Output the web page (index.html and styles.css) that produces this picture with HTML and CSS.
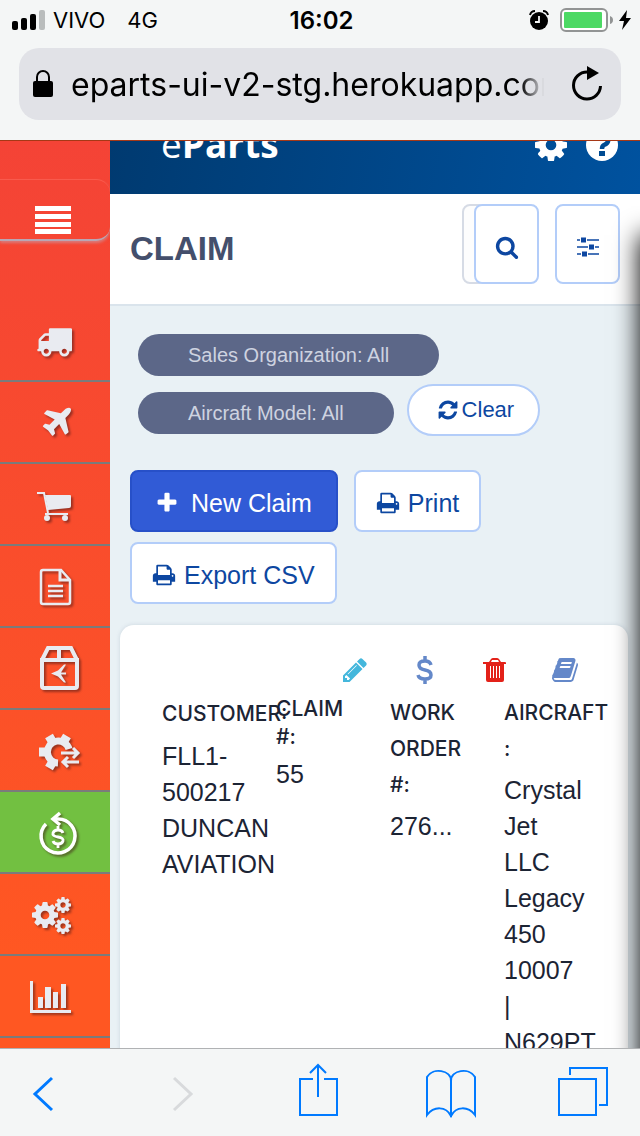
FILE: index.html
```html
<!DOCTYPE html>
<html lang="en">
<head>
<meta charset="utf-8">
<meta name="viewport" content="width=device-width, initial-scale=1">
<title>eParts – Claim</title>
<link rel="stylesheet" href="styles.css">
</head>
<body>
<svg class="sprite" aria-hidden="true">
  <symbol id="cog" viewBox="128 128 1536 1536"><path d="M1152 896q0-106-75-181t-181-75-181 75-75 181 75 181 181 75 181-75 75-181zm512-109v222q0 12-8 23t-20 13l-185 28q-19 54-39 91 35 50 107 138 10 12 10 25t-9 23q-27 37-99 108t-94 71q-12 0-26-9l-138-108q-44 23-91 38-16 136-29 186-7 28-36 28h-222q-14 0-24.500-8.500t-11.500-21.500l-28-184q-49-16-90-37l-141 107q-10 9-25 9-14 0-25-11-126-114-165-168-7-10-7-23 0-12 8-23 15-21 51-66.500t54-70.500q-27-50-41-99l-183-27q-13-2-21-12.500t-8-23.500v-222q0-12 8-23t19-13l186-28q14-46 39-92-40-57-107-138-10-12-10-24 0-10 9-23 26-36 98.500-107.500t94.500-71.500q13 0 26 10l138 107q44-23 91-38 16-136 29-186 7-28 36-28h222q14 0 24.500 8.500t11.500 21.500l28 184q49 16 90 37l142-107q9-9 24-9 13 0 25 10 129 119 165 170 7 8 7 22 0 12-8 23-15 21-51 66.500t-54 70.500q26 50 41 98l183 28q13 2 21 12.500t8 23.500z"/></symbol>
  <symbol id="print" viewBox="0 0 1792 1792"><path d="M448 1536h896v-256h-896v256zm0-640h896v-384h-160q-40 0-68-28t-28-68v-160h-640v640zm1152 64q0-26-19-45t-45-19-45 19-19 45 19 45 45 19 45-19 19-45zm128 0v416q0 13-9.500 22.500t-22.500 9.500h-224v160q0 40-28 68t-68 28h-960q-40 0-68-28t-28-68v-160h-224q-13 0-22.500-9.500t-9.500-22.500v-416q0-79 56.500-135.500t135.500-56.500h64v-544q0-40 28-68t68-28h672q40 0 88 20t76 48l152 152q28 28 48 76t20 88v256h64q79 0 135.500 56.500t56.500 135.500z"/></symbol>
</svg>

<header class="browser-top">
  <div class="status">
    <div class="status-left">
      <svg width="34" height="22" viewBox="0 0 34 22" aria-hidden="true"><rect x="0" y="12" width="6" height="9" rx="2"/><rect x="9" y="9" width="6" height="12" rx="2"/><rect x="18" y="5" width="6" height="16" rx="2"/><rect x="27" y="1" width="6" height="20" rx="2" fill="#b9bcbc"/></svg>
      <span>VIVO</span><span class="network">4G</span>
    </div>
    <time class="clock">16:02</time>
    <div class="status-right">
      <svg class="alarm" width="20" height="20" viewBox="0 0 20 20" aria-hidden="true"><circle cx="10" cy="11" r="9"/><path d="M1 5Q2 1 6 1M19 5Q18 1 14 1" fill="none" stroke="#000" stroke-width="2"/><path d="M10 6v6H6" fill="none" stroke="#f4f6f6" stroke-width="1.800"/></svg>
      <svg width="54" height="24" viewBox="0 0 54 24" aria-hidden="true"><rect x="1" y="1" width="46" height="22" rx="5" fill="#fff" stroke="#929494" stroke-width="2"/><rect x="4" y="4" width="38" height="16" rx="1" fill="#4cd964"/><path d="M50 8q3 1 3 4t-3 4z" fill="#929494"/></svg>
      <svg width="12" height="20" viewBox="0 0 12 20" aria-hidden="true"><path d="M8 0L0 11h5L3 20l9-12H7z"/></svg>
    </div>
  </div>
  <form class="address">
    <svg width="22" height="30" viewBox="0 0 22 30" aria-hidden="true"><rect x="1" y="12" width="20" height="16" rx="2"/><path d="M5 13V8a6 6 0 0 1 12 0v5" fill="none" stroke="#000" stroke-width="2"/></svg>
    <input class="url" type="text" aria-label="Address" value="eparts-ui-v2-stg.herokuapp.com">
    <button class="reload" type="button" aria-label="Reload"><svg width="32" height="36" viewBox="0 0 32 36"><path d="M16 6A13.500 13.500 0 1 0 29.500 20" fill="none" stroke="#000" stroke-width="3"/><path d="M16 0l12 7-12 7z"/></svg></button>
  </form>
</header>

<div class="app">
  <nav class="sidebar" aria-label="Main">
    <button class="menu" type="button" aria-label="Menu"><svg width="36" height="30" viewBox="0 0 36 30"><path d="M0 1h36v5H0zM0 9h36v5H0zM0 17h36v5H0zM0 24h36v5H0z"/></svg></button>
    <a class="nav-item" href="#" aria-label="Shipping"><svg viewBox="0 0 48 48"><path transform="translate(5 7) scale(.0201)" d="M640 1408q0-52-38-90t-90-38-90 38-38 90 38 90 90 38 90-38 38-90zm-384-512h384v-256h-158q-13 0-22 9l-195 195q-9 9-9 22v30zm1280 512q0-52-38-90t-90-38-90 38-38 90 38 90 90 38 90-38 38-90zm256-1088v1024q0 15-4 26.500t-13.500 18.500-16.500 11.500-23.500 6-22.500 2-25.500 0-22.500-.5q0 106-75 181t-181 75-181-75-75-181h-384q0 106-75 181t-181 75-181-75-75-181h-64q-3 0-22.500.5t-25.500 0-22.500-2-23.500-6-16.500-11.500-13.500-18.500-4-26.500q0-26 19-45t45-19v-320q0-8-.5-35t0-38 2.500-34.500 6.500-37 14-30.500 22.500-30l198-198q19-19 50.500-32t58.500-13h160v-192q0-26 19-45t45-19h1024q26 0 45 19t19 45z"/></svg></a>
    <a class="nav-item" href="#" aria-label="Aircraft"><svg viewBox="0 0 48 48"><path transform="translate(8 7) scale(.0201)" d="M1568 160q44 52 12 148t-108 172l-161 161 160 696q5 19-12 33l-128 96q-7 6-19 6-4 0-7-1-15-3-21-16l-279-508-259 259 53 194q5 17-8 31l-96 96q-9 9-23 9h-2q-15-2-24-13l-189-252-252-189q-11-7-13-23-1-13 9-25l96-97q9-9 23-9 6 0 8 1l194 53 259-259-508-279q-14-8-17-24-2-16 9-27l128-128q14-13 30-8l665 159 160-160q76-76 172-108t148 12z"/></svg></a>
    <a class="nav-item" href="#" aria-label="Cart"><svg viewBox="0 0 48 48"><path d="M14 15h25q1 0 1 1v10q0 2-2 2l-21 2z"/><path d="M6 13h7l4 20M14 34h23" fill="none" stroke="currentColor" stroke-width="2"/><circle cx="16" cy="38" r="3"/><circle cx="34" cy="38" r="3"/></svg></a>
    <a class="nav-item" href="#" aria-label="Documents"><svg viewBox="0 0 48 48" class="line"><path d="M12 8h18l9 10v22q0 2-2 2H12q-2 0-2-2V10q0-2 2-2z" stroke-width="2.500"/><path d="M29 8v10h10" stroke-width="3"/><path d="M17 24h15M17 29h15M17 34h15" stroke-width="2.500"/></svg></a>
    <a class="nav-item" href="#" aria-label="Parts"><svg viewBox="0 0 48 48"><g class="line"><path d="M11 16h35v26q0 2-2 2H13q-2 0-2-2zM11 16L17 4h23l6 12M28 4v11" stroke-width="4"/></g><path d="M20 29.500l7-3 6-6h2l-5 8h5v2h-5l5 8h-2l-6-6z"/></svg></a>
    <a class="nav-item" href="#" aria-label="Exchange"><svg viewBox="0 0 48 48" class="line"><path d="M38 23A11 11 0 1 0 27 37" stroke-width="7"/><path d="M33 15l3-5M21 15l-3-5M15 26H8M21 37l-3 5" stroke-width="9"/><path d="M30 27h16M42 22l5 5-5 5M48 36H33M37 31l-5 5 5 5" stroke-width="3"/></svg></a>
    <a class="nav-item active" href="#" aria-label="Claim"><svg viewBox="0 0 48 48" class="line"><path d="M22 11h5A17 17 0 1 1 15 16" stroke-width="3.500"/><path d="M29 5l-7 6 7 6" stroke-width="3.500"/><path d="M32 25q-1-3-5-3t-5 3 5 4 5 4-5 3-5-3M27 18v4M27 36v4" stroke-width="2.800"/></svg></a>
    <a class="nav-item" href="#" aria-label="Settings"><svg viewBox="0 0 48 48"><use href="#cog" x="1" y="12" width="26" height="26"/><use href="#cog" x="24" y="7" width="16" height="16"/><use href="#cog" x="24" y="28" width="16" height="16"/></svg></a>
    <a class="nav-item" href="#" aria-label="Reports"><svg viewBox="0 0 48 48"><path d="M-1 9h3v29h38v3H-1zM7 25h5v11H7zM14 15h6v21h-6zM22 20h5v16h-5zM30 12h5v24h-5z"/></svg></a>
  </nav>

  <main class="content">
    <div class="brandbar">
      <div class="logo"><span class="logo-e">e</span>Parts</div>
      <button class="brand-action" type="button" aria-label="Settings"><svg width="34" height="34"><use href="#cog" x="0" y="1" width="32" height="32"/></svg></button>
      <button class="brand-action" type="button" aria-label="Help"><svg width="34" height="34" viewBox="0 0 34 34"><circle cx="16" cy="17" r="16"/><path d="M10 12q1-5 6-5t6 4-4 6q-2 1-2 4" fill="none" stroke="#004b92" stroke-width="4.500"/><path d="M13 23h6v5h-6z" fill="#004b92"/></svg></button>
    </div>

    <div class="titlebar">
      <h1 class="title">CLAIM</h1>
      <input class="search-field" type="search" aria-label="Search claims">
      <button class="square search-button" type="button" aria-label="Search"><svg width="24" height="24" viewBox="0 0 1792 1792"><path d="M1216 832q0-185-131.500-316.500t-316.500-131.500-316.500 131.500-131.500 316.500 131.500 316.500 316.500 131.500 316.500-131.500 131.500-316.500zm512 832q0 52-38 90t-90 38q-54 0-90-38l-343-342q-179 124-399 124-143 0-273.500-55.500t-225-150-150-225-55.500-273.500 55.500-273.500 150-225 225-150 273.500-55.500 273.500 55.500 225 150 150 225 55.500 273.500q0 220-124 399l343 343q37 37 37 90z"/></svg></button>
      <button class="square" type="button" aria-label="Filters"><svg width="22" height="20" viewBox="0 0 22 20"><path d="M0 2.300h3v1.400H0zM10 2.300h12v1.400H10zM4 .5h5v5H4zM0 9.300h11v1.400H0zM18 9.300h4v1.400h-4zM12 7.500h5v5h-5zM0 16.300h4v1.400H0zM11 16.300h11v1.400H11zM5 14.500h5v5H5z"/></svg></button>
    </div>

    <section class="workspace">
      <div class="filters">
        <span class="chip">Sales Organization: All</span>
        <span class="chip">Aircraft Model: All</span>
        <button class="button clear" type="button"><svg width="22" height="22" viewBox="0 0 1792 1792"><path d="M1639 1056q0 5-1 7-64 268-268 434.500t-478 166.500q-146 0-282.500-55t-243.500-157l-129 129q-19 19-45 19t-45-19-19-45v-448q0-26 19-45t45-19h448q26 0 45 19t19 45-19 45l-137 137q71 66 161 102t187 36q134 0 250-65t186-179q11-17 53-117 8-23 30-23h192q13 0 22.500 9.500t9.500 22.500zm25-800v448q0 26-19 45t-45 19h-448q-26 0-45-19t-19-45 19-45l138-138q-148-137-349-137-134 0-250 65t-186 179q-11 17-53 117-8 23-30 23h-199q-13 0-22.500-9.500t-9.500-22.500v-7q65-268 270-434.500t480-166.500q146 0 284 55.500t245 156.500l130-129q19-19 45-19t45 19 19 45z"/></svg>Clear</button>
      </div>

      <div class="actions">
        <button class="button primary" type="button"><svg width="24" height="24" viewBox="0 0 1792 1792"><path d="M1600 736v192q0 40-28 68t-68 28h-416v416q0 40-28 68t-68 28h-192q-40 0-68-28t-28-68v-416h-416q-40 0-68-28t-28-68v-192q0-40 28-68t68-28h416v-416q0-40 28-68t68-28h192q40 0 68 28t28 68v416h416q40 0 68 28t28 68z"/></svg>New Claim</button>
        <button class="button" type="button"><svg width="24" height="24"><use href="#print"/></svg>Print</button>
        <button class="button" type="button"><svg width="24" height="24"><use href="#print"/></svg>Export CSV</button>
      </div>

      <article class="card">
        <div class="card-tools">
          <button class="tool edit" type="button" aria-label="Edit"><svg viewBox="0 0 1792 1792"><path d="M491 1536l91-91-235-235-91 91v107h128v128h107zm523-928q0-22-22-22-10 0-17 7l-542 542q-7 7-7 17 0 22 22 22 10 0 17-7l542-542q7-7 7-17zm-54-192l416 416-832 832h-416v-416zm683 96q0 53-37 90l-166 166-416-416 166-165q36-38 90-38 53 0 91 38l235 234q37 39 37 91z"/></svg></button>
          <button class="tool" type="button" aria-label="Payment"><svg viewBox="0 0 28 28" class="line"><path d="M20 9q-1-4-6-4-6 0-6 4t6 5 6 5-6 4q-6 0-7-4M14 0v5M14 23v5" stroke-width="3.500"/></svg></button>
          <button class="tool delete" type="button" aria-label="Delete"><svg viewBox="0 0 28 28"><path fill-rule="evenodd" d="M2 6h6l2-3q1-1 2-1h4q1 0 2 1l2 3h4q1 0 1 1v1h-2v16q0 2-2 2H7q-2 0-2-2V8H2zm8 0h8l-1-2h-6zM9 10v12h1V10zm3 0v12h1V10zm3 0v12h1V10zm3 0v12h1V10z"/></svg></button>
          <button class="tool" type="button" aria-label="Notes"><svg viewBox="0 0 1792 1792"><path d="M1703 478q40 57 18 129l-275 906q-19 64-76.500 107.500t-122.500 43.500h-923q-77 0-148.500-53.500t-99.500-131.500q-24-67-2-127 0-4 3-27t4-37q1-8-3-21.500t-3-19.500q2-11 8-21t16.500-23.500 16.500-23.500q23-38 45-91.500t30-91.500q3-10 .5-30t-.5-28q3-11 17-28t17-23q21-36 42-92t25-90q1-9-2.500-32t.5-28q4-13 22-30.500t22-22.500q19-26 42.500-84.500t27.500-96.500q1-8-3-25.500t-2-26.500q2-8 9-18t18-23 17-21q8-12 16.500-30.500t15-35 16-36 19.500-32 26.500-23.500 36-11.500 47.500 5.500l-1 3q38-9 51-9h761q74 0 114 56t18 130l-274 906q-36 119-71.500 153.500t-128.500 34.500h-869q-27 0-38 15-11 16-1 43 24 70 144 70h923q29 0 56-15.500t35-41.500l300-987q7-22 5-57 38 15 59 43zm-1064 2q-4 13 2 22.500t20 9.500h608q13 0 25.500-9.500t16.500-22.500l21-64q4-13-2-22.500t-20-9.500h-608q-13 0-25.500 9.500t-16.500 22.500zm-83 256q-4 13 2 22.500t20 9.500h608q13 0 25.500-9.500t16.500-22.500l21-64q4-13-2-22.500t-20-9.500h-608q-13 0-25.500 9.500t-16.500 22.500z"/></svg></button>
        </div>
        <dl class="fields">
          <div class="field customer"><dt>CUSTOMER:</dt><dd>FLL1-<br>500217<br>DUNCAN<br>AVIATION</dd></div>
          <div class="field claim"><dt>CLAIM<br>#:</dt><dd>55</dd></div>
          <div class="field"><dt>WORK<br>ORDER<br>#:</dt><dd>276...</dd></div>
          <div class="field"><dt>AIRCRAFT<br>:</dt><dd>Crystal<br>Jet<br>LLC<br>Legacy<br>450<br>10007<br>|<br>N629PT</dd></div>
        </dl>
      </article>
    </section>
  </main>
  <aside class="drawer" aria-hidden="true"></aside>
</div>

<footer class="browser-bottom">
  <button class="back" type="button" aria-label="Back"><svg width="24" height="56" viewBox="0 0 24 56"><path d="M21 15L4 31l17 16" stroke-width="3"/></svg></button>
  <button class="forward" type="button" aria-label="Forward" disabled><svg width="24" height="56" viewBox="0 0 24 56"><path d="M3 15l17 16L3 47" stroke-width="3"/></svg></button>
  <button class="share" type="button" aria-label="Share"><svg width="40" height="56" viewBox="0 0 40 56"><path d="M15 16H2v36h37V16H26M20 34V2M12 10l8-8 8 8" stroke-width="2"/></svg></button>
  <button type="button" aria-label="Bookmarks"><svg width="52" height="56" viewBox="0 0 52 56"><path d="M27 54V18c0-11-18-14-24-4v38c7-9 19-9 24 1 5-10 17-10 24-1V14c-6-10-24-7-24 4" stroke-width="2"/></svg></button>
  <button type="button" aria-label="Tabs"><svg width="50" height="56" viewBox="0 0 50 56"><path d="M1 16h37v36H1zM12 12V5h37v37h-8" stroke-width="2"/></svg></button>
</footer>
</body>
</html>
```
FILE: styles.css
```css
* { box-sizing: border-box; }

body {
  margin: 0;
  height: 100vh;
  display: flex;
  flex-direction: column;
  overflow: hidden;
  background: #f4f6f6;
  color: #1c2434;
  font-family: "Liberation Sans", Arial, sans-serif;
  font-size: 25px;
}

button { border: 0; padding: 0; background: none; font: inherit; color: inherit; }
svg { display: block; flex: none; fill: currentColor; }
.sprite { position: absolute; width: 0; height: 0; }
.line { fill: none; stroke: currentColor; }

/* Browser chrome */
.browser-top {
  flex: none;
  padding: 0 19px 20px;
  color: #000;
  font-family: Inter, sans-serif;
}
.status {
  display: grid;
  grid-template-columns: 1fr auto 1fr;
  align-items: center;
  height: 40px;
  margin: 0 -10px 8px -7px;
  font-size: 22px;
}
.status-left, .status-right { display: flex; align-items: center; gap: 7px; }
.status-right { justify-content: flex-end; gap: 5px; }
.alarm { margin-right: 6px; }
.network { margin-left: 15px; }
.clock { font-size: 24px; font-weight: 600; }
.address {
  display: flex;
  align-items: center;
  height: 72px;
  margin: 0;
  padding: 0 18px 0 13px;
  border-radius: 20px;
  background: #e1e2e7;
}
.url {
  flex: 1;
  min-width: 0;
  height: 60px;
  margin: 0 22px 0 17px;
  padding: 0;
  border: 0;
  outline: 0;
  background: none;
  color: #000;
  font: 32px Inter, sans-serif;
  -webkit-mask-image: linear-gradient(90deg, #000 94%, transparent 99%);
  mask-image: linear-gradient(90deg, #000 94%, transparent 99%);
}

/* Application */
.app {
  position: relative;
  flex: 1;
  min-height: 0;
  display: grid;
  grid-template-columns: 110px 1fr;
  overflow: hidden;
  border-top: 1px solid rgba(0, 0, 0, .35);
  background: linear-gradient(#f44336, #ff5722 90%);
}
.sidebar { min-height: 0; overflow: hidden; color: #e9ebf1; }
.menu {
  display: flex;
  justify-content: center;
  align-items: flex-end;
  width: 100%;
  height: 62px;
  margin: 38px 0 59px;
  padding: 0 4px 4px 0;
  border-top: 1px solid #f95a4d;
  border-bottom: 2px solid #b9a6b4;
  border-radius: 0 14px 14px 0;
  box-shadow: 0 2px 3px rgba(200, 160, 170, .6);
  color: #fff;
}
.nav-item {
  display: flex;
  justify-content: center;
  align-items: center;
  height: 82px;
  border-bottom: 2px solid #7b7b7b;
  color: #e9ebf1;
}
.nav-item svg { width: 48px; height: 48px; overflow: visible; filter: drop-shadow(2px 2px 1px rgba(60, 20, 20, .5)); }
.active { background: #72c041; color: #fff; }

.content { min-width: 0; min-height: 0; overflow: hidden; background: #e9f1f5; }
.brandbar {
  display: flex;
  align-items: flex-end;
  gap: 17px;
  height: 53px;
  padding: 0 20px 32px 51px;
  overflow: hidden;
  background: linear-gradient(100deg, #003a70, #00529f);
  color: #fff;
}
.logo { flex: 1; margin-bottom: -6px; font: 700 37px/48px "Open Sans", sans-serif; }
.logo-e { font-weight: 500; }
.titlebar {
  display: flex;
  align-items: center;
  height: 112px;
  padding: 10px 20px 20px;
  border-bottom: 2px solid #dae4ec;
  background: #fff;
}
.title { flex: 1; margin: 10px 0 0; color: #444f6c; font-size: 33px; line-height: 40px; }
.search-field {
  width: 24px;
  height: 80px;
  margin: 0 -12px 0 0;
  padding: 0;
  border: 2px solid #d6dbe5;
  border-radius: 8px;
  background: #fdfdfd;
}
.square {
  display: flex;
  align-items: center;
  justify-content: center;
  width: 65px;
  height: 80px;
  padding-top: 6px;
  border: 2px solid #b3cdf9;
  border-radius: 8px;
  background: #fff;
  color: #0d47a1;
}
.search-button { z-index: 1; margin-right: 16px; }

.workspace { padding: 20px 20px 0; }
.filters { display: flex; flex-wrap: wrap; align-items: flex-start; }
.chip {
  margin: 8px;
  padding: 0 50px;
  border-radius: 21px;
  background: #5c6788;
  color: #ced3e0;
  font-size: 20px;
  line-height: 42px;
}
.button {
  display: flex;
  align-items: center;
  justify-content: center;
  gap: 8px;
  height: 62px;
  padding: 4px 20px 0;
  border: 2px solid #b3cdf9;
  border-radius: 8px;
  background: #fff;
  color: #0d47a1;
  font-size: 25px;
}
.clear {
  gap: 3px;
  height: 52px;
  margin-left: 5px;
  padding: 0 24px 0 28px;
  border-radius: 26px;
  font-size: 22px;
}
.actions { display: flex; flex-wrap: wrap; gap: 10px 16px; margin: 28px 0 21px; }
.primary { gap: 12px; padding: 4px 24px 0 23px; border-color: #2750c8; background: #315bd6; color: #fff; }

.card {
  width: 508px;
  margin: 0 -10px;
  padding: 28px 10px 48px 42px;
  border-radius: 14px;
  background: #fff;
  box-shadow: 0 0 4px rgba(90, 110, 140, .2);
}
.card-tools { display: flex; justify-content: flex-end; gap: 42px; padding-right: 39px; color: #6488c9; }
.tool, .tool svg { width: 28px; height: 34px; }
.edit { color: #44b7dc; }
.delete { color: #e32119; }
.fields { display: grid; grid-template-columns: repeat(4, 114px); margin: 8px 0 0; }
.field dt { margin-bottom: 5px; font: 500 21px/36px Inter, sans-serif; }
.field dd { margin: 0; line-height: 36px; }
.customer dt { line-height: 38px; }
.claim dt { line-height: 28px; }

/* Off-canvas drawer, only its shadow reaches the page */
.drawer {
  position: absolute;
  top: 94px;
  bottom: -40px;
  left: 100%;
  width: 320px;
  background: #fff;
  box-shadow: 0 0 24px #000;
}

.browser-bottom {
  flex: none;
  display: flex;
  align-items: flex-start;
  justify-content: space-between;
  height: 88px;
  padding: 14px 32px 0 31px;
  border-top: 1px solid #b0b2b4;
  color: #007aff;
}
.browser-bottom svg { fill: none; stroke: currentColor; }
.browser-bottom button:disabled { color: #d8dadc; }
.back { padding-right: 34px; }
.forward { padding-right: 20px; }
.share { padding-right: 4px; }
```
